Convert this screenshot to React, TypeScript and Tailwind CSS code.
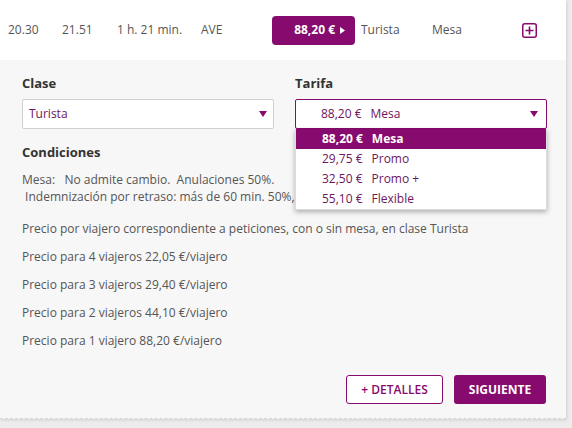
import { ReactNode } from 'react';

const tarifas = [
  { price: '88,20 €', name: 'Mesa', active: true },
  { price: '29,75 €', name: 'Promo', active: false },
  { price: '32,50 €', name: 'Promo +', active: false },
  { price: '55,10 €', name: 'Flexible', active: false },
];

const precios = [
  'Precio para 4 viajeros 22,05 €/viajero',
  'Precio para 3 viajeros 29,40 €/viajero',
  'Precio para 2 viajeros 44,10 €/viajero',
  'Precio para 1 viajero 88,20 €/viajero',
];

function Caret() {
  return (
    <svg className="w-[8px] h-[6px]" viewBox="0 0 8 6">
      <path d="M0 0h8L4 6z" fill="#870a6e" />
    </svg>
  );
}

function Label({ children }: { children: ReactNode }) {
  return <div className="text-[13px] font-bold text-[#333] leading-none mb-[9px]">{children}</div>;
}

export default function App() {
  return (
    <div className="w-[572px] h-[428px] bg-[#ececec] font-['Open_Sans',sans-serif] text-[#555] overflow-hidden">
      <div className="w-[566px] bg-white shadow-[1px_1px_3px_rgba(0,0,0,0.12)]">
        {/* Train row */}
        <div className="h-[60px] flex items-center pl-[8px] text-[12px] text-[#555]">
          <span className="w-[54px]">20.30</span>
          <span className="w-[55px]">21.51</span>
          <span className="w-[84px]">1 h. 21 min.</span>
          <span className="w-[71px]">AVE</span>
          <button className="w-[83px] h-[29px] rounded-[4px] bg-[#870a6e] text-white font-bold text-[12px] flex items-center justify-end pr-[10px] gap-[5px]">
            88,20 €
            <svg className="w-[5px] h-[7px]" viewBox="0 0 5 7">
              <path d="M0 0l5 3.5L0 7z" fill="#fff" />
            </svg>
          </button>
          <span className="w-[77px] pl-[6px]">Turista</span>
          <span className="w-[90px]">Mesa</span>
          <svg className="w-[15px] h-[15px]" viewBox="0 0 15 15">
            <rect x="0.75" y="0.75" width="13.5" height="13.5" rx="2" fill="none" stroke="#870a6e" strokeWidth="1.5" />
            <path d="M7.5 3.5v8M3.5 7.5h8" stroke="#870a6e" strokeWidth="1.6" />
          </svg>
        </div>

        {/* Detail panel */}
        <div className="bg-[#f7f7f7] pt-[17px] pl-[22px] pr-[19px] pb-[14px] border-b border-dashed border-[#d6d6d6]">
          <div className="grid grid-cols-2 gap-[21px]">
            <div>
              <Label>Clase</Label>
              <div className="h-[30px] bg-white border border-[#d0d0d0] rounded-[2px] flex items-center justify-between pl-[6px] pr-[6px] text-[12px] text-[#6d1660]">
                Turista
                <Caret />
              </div>
            </div>
            <div className="relative">
              <Label>Tarifa</Label>
              <div className="h-[30px] bg-white border border-[#870a6e] rounded-[2px] flex items-center justify-between pl-[25px] pr-[8px] text-[12px] text-[#6d1660]">
                <span>
                  88,20 €<span className="ml-[9px]">Mesa</span>
                </span>
                <Caret />
              </div>
              <div className="absolute left-0 right-0 top-[52px] bg-white shadow-[0_2px_5px_rgba(0,0,0,0.3)] z-10 border border-[#ddd] border-t-0">
                {tarifas.map((t) => (
                  <div
                    key={t.name}
                    className={`h-[20px] flex items-center pl-[26px] text-[12px] ${
                      t.active ? 'bg-[#870a6e] text-white font-bold' : 'text-[#6d1660]'
                    }`}
                  >
                    <span>{t.price}</span>
                    <span className="ml-[9px]">{t.name}</span>
                  </div>
                ))}
              </div>
            </div>
          </div>

          <div className="mt-[17px] text-[13px] font-bold text-[#333] leading-none">Condiciones</div>
          <div className="mt-[12px] text-[12px] leading-[17px]">
            <div className="whitespace-pre">Mesa:   No admite cambio.  Anulaciones 50%.</div>
            <div className="whitespace-pre"> Indemnización por retraso: más de 60 min. 50%,</div>
          </div>

          <div className="mt-[10px] text-[12px] leading-[28px]">
            <div>Precio por viajero correspondiente a peticiones, con o sin mesa, en clase Turista</div>
            {precios.map((p) => (
              <div key={p}>{p}</div>
            ))}
          </div>

          <div className="mt-[20px] flex justify-end gap-[11px] pr-[1px]">
            <button className="w-[97px] h-[29px] rounded-[3px] border border-[#870a6e] bg-white text-[#870a6e] text-[12px] font-semibold">
              + DETALLES
            </button>
            <button className="w-[92px] h-[29px] rounded-[3px] bg-[#870a6e] text-white text-[12px] font-bold">
              SIGUIENTE
            </button>
          </div>
        </div>
      </div>
    </div>
  );
}
